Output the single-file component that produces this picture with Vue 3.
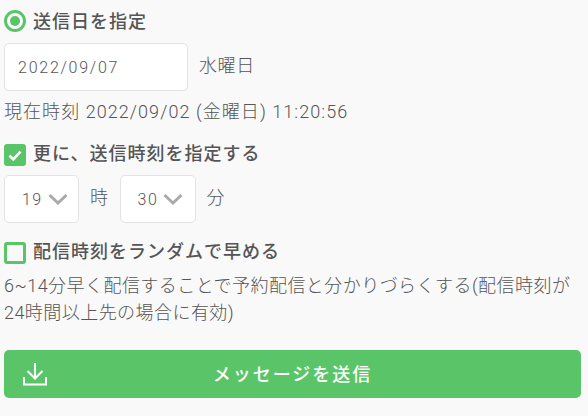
<script setup>
</script>

<template>
  <div class="page">
    <label class="opt first">
      <span class="radio"><span class="dot"></span></span>
      <span class="opt-label">送信日を指定</span>
    </label>
    <div class="row date-row">
      <div class="field date">2022/09/07</div>
      <span class="txt">水曜日</span>
    </div>
    <p class="now">現在時刻 2022/09/02 (金曜日) 11:20:56</p>
    <label class="opt second">
      <span class="check on">
        <svg viewBox="0 0 22 22" width="22" height="22"><path d="M5.5 11.5l3.8 3.8 7.2-7.6" fill="none" stroke="#fff" stroke-width="2.6"/></svg>
      </span>
      <span class="opt-label up">更に、送信時刻を指定する</span>
    </label>
    <div class="row time-row">
      <div class="field sel s1">
        <span>19</span>
        <svg viewBox="0 0 20 12" width="20" height="12"><path d="M1.5 2l8.500 8 8.500-8" fill="none" stroke="#aaa" stroke-width="3"/></svg>
      </div>
      <span class="txt">時</span>
      <div class="field sel s2">
        <span>30</span>
        <svg viewBox="0 0 20 12" width="20" height="12"><path d="M1.500 2l8.500 8 8.500-8" fill="none" stroke="#aaa" stroke-width="3"/></svg>
      </div>
      <span class="txt">分</span>
    </div>
    <label class="opt third">
      <span class="check"></span>
      <span class="opt-label up">配信時刻をランダムで早める</span>
    </label>
    <p class="note">6~14分早く配信することで予約配信と分かりづらくする(配信時刻が<br>24時間以上先の場合に有効)</p>
    <button class="send">
      <svg class="dl" viewBox="0 0 24 24" width="24" height="24"><path d="M12 1v15M4.500 9l7.500 7.500L19.500 9M1 15v7.500h22V15" fill="none" stroke="#fff" stroke-width="2"/></svg>
      <span class="send-label">メッセージを送信</span>
    </button>
  </div>
</template>

<style scoped>
.page {
  width: 588px;
  height: 416px;
  box-sizing: border-box;
  padding: 9px 7px 0 4px;
  background: #f9f9f9;
  color: #555;
  font-family: Roboto, "Noto Sans CJK JP", sans-serif;
  font-size: 18px;
  font-weight: 300;
  overflow: hidden;
}
.opt { display: flex; align-items: center; height: 26px; }
.opt-label { margin-left: 7px; font-size: 18px; font-weight: 500; letter-spacing: 1px; line-height: 26px; color: #555; white-space: nowrap; }
.opt-label.up { padding-bottom: 2px; }
.radio {
  width: 22px; height: 22px; box-sizing: border-box; margin-bottom: 2px;
  border: 3px solid #5ac568; border-radius: 50%;
  display: flex; align-items: center; justify-content: center;
}
.dot { width: 10px; height: 10px; border-radius: 50%; background: #5ac568; }
.row { display: flex; align-items: center; }
.date-row { margin-top: 8px; gap: 11px; }
.field {
  height: 48px; box-sizing: border-box;
  background: #fff; border: 1px solid #e3e3e3; border-radius: 5px;
  display: flex; align-items: center;
}
.date { width: 184px; padding-left: 13px; letter-spacing: 1.75px; font-size: 16px; }
.txt { white-space: nowrap; line-height: 26px; letter-spacing: 0.6px; padding-bottom: 2px; }
.now { margin: 9px 0 0; height: 24px; line-height: 24px; white-space: nowrap; letter-spacing: 1.06px; }
.second { margin-top: 18px; }
.check {
  width: 22px; height: 22px; box-sizing: border-box; border-radius: 3px;
  border: 3px solid #5ac568; display: flex; align-items: center; justify-content: center;
}
.check.on { background: #5ac568; border: 0; }
.time-row { margin-top: 7px; gap: 11px; }
.sel { padding-left: 17px; gap: 5px; letter-spacing: 1.4px; font-size: 16px; }
.s1 { width: 75px; }
.s2 { width: 76px; }
.third { margin-top: 17px; }
.note { margin: 6px 0 0; line-height: 27px; white-space: nowrap; font-size: 18px; letter-spacing: 0.45px; }
.send {
  position: relative; display: flex; align-items: center; justify-content: center;
  width: 577px; height: 48px; margin-top: 24px;
  background: #5ac568; color: #fff; border: 0; border-radius: 5px;
  font-family: inherit; font-size: 18px; font-weight: 500; letter-spacing: 2px;
}
.send-label { padding-bottom: 2px; }
.dl { position: absolute; left: 19px; top: 12px; }
</style>
